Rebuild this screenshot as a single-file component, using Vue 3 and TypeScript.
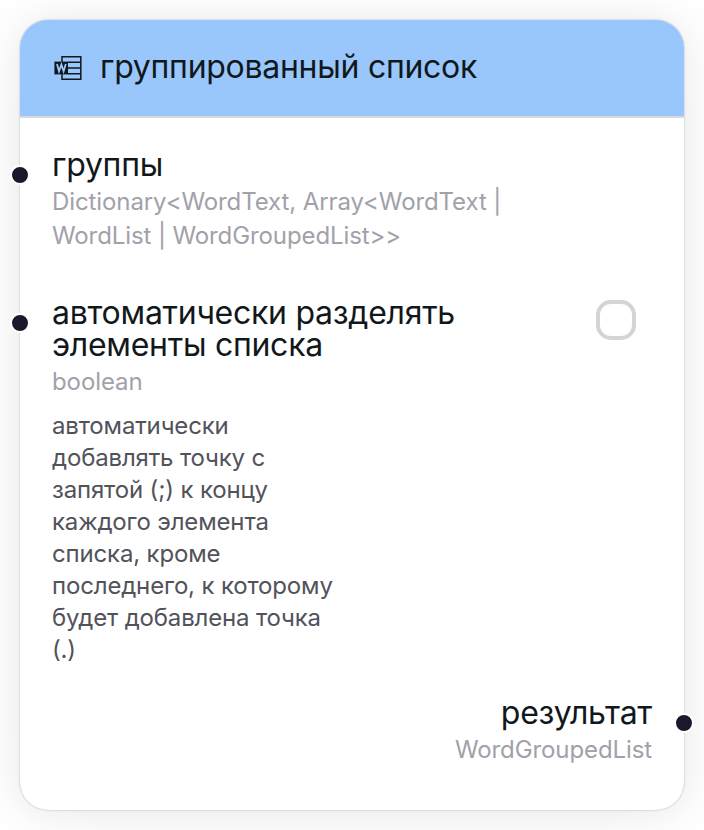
<script setup lang="ts">
interface Port { name: string; type: string }
const title = 'группированный список'
const groups: Port = { name: 'группы', type: 'Dictionary<WordText, Array<WordText | WordList | WordGroupedList>>' }
const split: Port = { name: 'автоматически разделять элементы списка', type: 'boolean' }
const hint = 'автоматически добавлять точку с запятой (;) к концу каждого элемента списка, кроме последнего, к которому будет добавлена точка (.)'
const result: Port = { name: 'результат', type: 'WordGroupedList' }
</script>

<template>
  <main class="canvas">
    <article class="node">
      <header class="head">
        <svg class="icon" viewBox="0 0 32 32" fill="none" stroke="currentColor" stroke-width="1.5">
          <path d="M10 11V5.7H28.8V28.2H10V22.5M16 11.2H28.8M16 17H28.8M16 22.8H28.8" />
          <path d="M2.4 10.6H16V23.4H2.4Z" fill="currentColor" stroke="none" />
          <path class="w" d="M5 13L7 20.3L9.4 13.6L11.6 20.3L13.8 13" />
        </svg>
        <h1>{{ title }}</h1>
      </header>
      <section class="port groups">
        <i class="dot left"></i>
        <h2>{{ groups.name }}</h2>
        <p class="type">{{ groups.type }}</p>
      </section>
      <section class="port split">
        <i class="dot left"></i>
        <div class="row">
          <h2>{{ split.name }}</h2>
          <span class="check"></span>
        </div>
        <p class="type">{{ split.type }}</p>
        <p class="hint">{{ hint }}</p>
      </section>
      <section class="port result">
        <i class="dot right"></i>
        <h2>{{ result.name }}</h2>
        <p class="type">{{ result.type }}</p>
      </section>
    </article>
  </main>
</template>

<style>
body { margin: 0; background: #fff; }
</style>
<style scoped>
.canvas { box-sizing: border-box; width: 704px; height: 830px; padding: 20px; overflow: hidden; font-family: Inter, sans-serif; }
.node { height: 790px; border-radius: 28px; background: #fff; color: #11181c; box-shadow: 0 0 30px rgba(0,0,0,.03), 0 4px 60px rgba(0,0,0,.08), 0 0 2px rgba(0,0,0,.3); }
.head { box-sizing: border-box; height: 98px; padding: 0 32px 2px; display: flex; align-items: center; gap: 16px; border-bottom: 2px solid #d9d9dc; border-radius: 28px 28px 0 0; background: #99c7fb; }
.icon { width: 32px; height: 32px; }
.w { stroke: #99c7fb; stroke-width: 1.8; }
h1, h2, p { margin: 0; font-weight: 400; }
h1 { font-size: 32px; line-height: 40px; letter-spacing: -.28px; }
h2 { font-size: 32px; line-height: 32px; letter-spacing: -.27px; }
.port { position: relative; padding: 0 32px; }
.groups { padding-top: 31px; }
.split { padding-top: 44px; }
.result { padding-top: 31px; text-align: right; }
.type { margin-top: 4px; font-size: 24px; line-height: 34px; letter-spacing: -.1px; color: #a1a1aa; }
.groups .type { width: 480px; }
.row { display: flex; justify-content: space-between; padding-right: 16px; }
.row h2 { width: 440px; }
.check { box-sizing: border-box; width: 40px; height: 40px; margin-top: 3px; border: 4px solid #d4d4d8; border-radius: 15px; }
.hint { width: 288px; margin-top: 11px; font-size: 24px; line-height: 32px; letter-spacing: -.16px; color: #52525b; }
.dot { position: absolute; width: 16px; height: 16px; border: 2px solid #fff; border-radius: 50%; background: #1a192b; }
.left { left: -10px; }
.right { right: -10px; }
.groups .dot { top: 47px; }
.split .dot { top: 60px; }
.result .dot { top: 47px; }
</style>
